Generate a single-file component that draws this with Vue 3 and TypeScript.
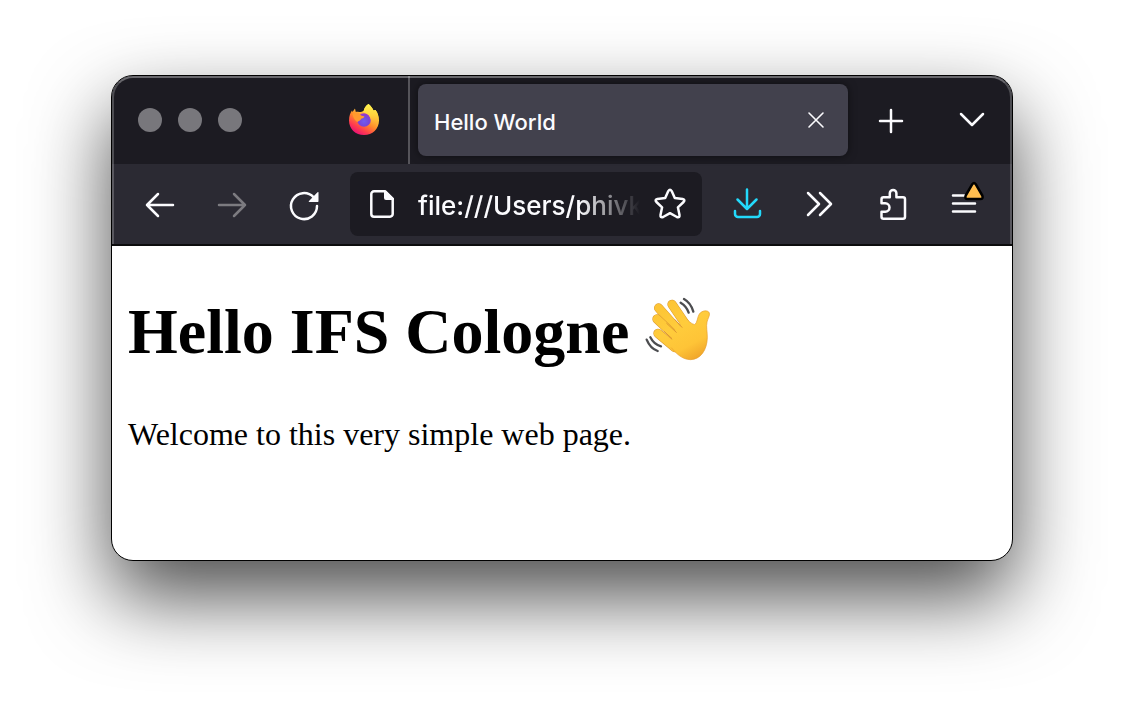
<script setup lang="ts">
import { ref } from 'vue'

const tabTitle = ref('Hello World')
const address = ref('file:///Users/phivk/')
const heading = ref('Hello IFS Cologne')
const message = ref('Welcome to this very simple web page.')
const fingers = [
  'M111 58L160 130',
  'M71 69L138 145',
  'M66 102L128 160',
  'M69 145L120 188',
]
</script>

<template>
  <div class="desktop">
    <div class="window">
      <header class="chrome">
        <div class="tabstrip">
          <div class="lights">
            <button v-for="label in ['Close', 'Minimise', 'Zoom']" :key="label" class="light" :aria-label="label"></button>
          </div>
          <button class="home" aria-label="Firefox View">
            <svg class="icon" viewBox="0 0 32 32">
              <defs>
                <linearGradient id="fox" x1="0.85" y1="0.1" x2="0.3" y2="1">
                  <stop offset="0" stop-color="#fff44f" />
                  <stop offset="0.3" stop-color="#ffc83c" />
                  <stop offset="0.55" stop-color="#ff8a2a" />
                  <stop offset="0.8" stop-color="#ff3c4e" />
                  <stop offset="1" stop-color="#e81078" />
                </linearGradient>
                <linearGradient id="tail" x1="0.5" y1="0" x2="0.5" y2="1">
                  <stop offset="0" stop-color="#fff44f" />
                  <stop offset="0.5" stop-color="#ffd03c" />
                  <stop offset="1" stop-color="#ff8a2a" stop-opacity="0" />
                </linearGradient>
                <radialGradient id="globe" cx="0.5" cy="0.6" r="0.6">
                  <stop offset="0" stop-color="#6e5cf0" />
                  <stop offset="0.6" stop-color="#7547d8" />
                  <stop offset="1" stop-color="#a333c8" />
                </radialGradient>
              </defs>
              <path fill="url(#fox)" d="M20.5 0C23 2 24.500 4.200 25.500 6.500L27.500 6C29.800 9 31 12.500 31 16.500C31 25 24.500 31 16 31C7.500 31 1 25 1 16.500C1 12 2.500 8.500 4 6.500L4.500 8L7 4.500L7.800 8C8.500 7.500 10 7.500 11 8C13 8 14.500 7.500 16 6.500C16 4 18 1.500 20.500 0Z" />
              <circle cx="16" cy="16" r="6.800" fill="url(#globe)" />
              <path fill="url(#tail)" d="M20.500 0C23 2 24.500 4.200 25.500 6.500L27.500 6C29.800 9 31 12.500 30 18C28 24 24 25 22 23C25 19 22.500 13 20 10.500C17.500 9 16 8.500 15.500 7.500C16 4 18 1.500 20.500 0Z" />
              <path fill="#ff9a2e" d="M4.500 10C7 8 11 8 12.500 11C14 12.300 16 12 16.500 12.500C16 14 13.500 14.500 13 15C12.500 16.500 10.500 17 9.500 18C7.500 17 5 14 4.500 10Z" />
            </svg>
          </button>
          <div class="tab">
            <span class="tab-title">{{ tabTitle }}</span>
            <button class="tab-close" aria-label="Close tab">
              <svg class="icon thin" viewBox="0 0 32 32"><path d="M9 9L23 23M23 9L9 23" /></svg>
            </button>
          </div>
          <button class="tool strip-tool" aria-label="New tab">
            <svg class="icon" viewBox="0 0 32 32"><path d="M15 6V28M4 17H26" /></svg>
          </button>
          <button class="tool strip-tool" aria-label="List all tabs">
            <svg class="icon" viewBox="0 0 32 32"><path d="M5 10L16 21L27 10" /></svg>
          </button>
        </div>

        <nav class="toolbar" aria-label="Navigation">
          <button class="tool" aria-label="Back">
            <svg class="icon" viewBox="0 0 32 32"><path d="M29 17H3M14 6L3 17L14 28" /></svg>
          </button>
          <button class="tool dim" aria-label="Forward" disabled>
            <svg class="icon" viewBox="0 0 32 32"><path d="M3 17H29M18 6L29 17L18 28" /></svg>
          </button>
          <button class="tool" aria-label="Reload">
            <svg class="icon" viewBox="0 0 32 32">
              <path d="M29 18A13 13 0 1 1 25.500 9.200" />
              <path class="solid" d="M30.500 4.500V13.300Q30.500 14 29.800 14H21.500Q20 14 21 13L29.500 4.200Q30.500 3.500 30.500 4.500Z" />
            </svg>
          </button>
          <div class="urlbar">
            <svg class="icon" viewBox="0 0 32 32">
              <path d="M19 3.300H8a2.700 2.700 0 0 0-2.700 2.700V26a2.700 2.700 0 0 0 2.700 2.700H24a2.700 2.700 0 0 0 2.700-2.700V11Z" />
              <path class="solid" d="M18 2.500H20L28 10.500V12H20a2 2 0 0 1-2-2Z" />
            </svg>
            <input v-model="address" class="address" type="text" aria-label="Address" spellcheck="false" />
            <button class="star" aria-label="Bookmark this page">
              <svg class="icon" viewBox="0 0 32 32">
                <path d="M14.300 3.100Q16 .5 17.700 3.100L20.800 10.100L28.600 11Q31.600 11.700 29.600 14L23.900 19.300L25.500 27Q25.800 30.200 22.900 29L16 25.200L9.100 29Q6.200 30.200 6.500 27L8.100 19.300L2.400 14Q.4 11.700 3.400 11L11.200 10.100Z" />
              </svg>
            </button>
          </div>
          <button class="tool download" aria-label="Downloads">
            <svg class="icon" viewBox="0 0 32 32">
              <path d="M15 1.500V20M5.500 11.500L15 21L24.500 11.500M3 23V26a3 3 0 0 0 3 3H25a3 3 0 0 0 3-3V23" />
            </svg>
          </button>
          <button class="tool" aria-label="More tools">
            <svg class="icon" viewBox="0 0 32 32"><path d="M4 5L15 16L4 27M16 5L27 16L16 27" /></svg>
          </button>
          <button class="tool" aria-label="Extensions">
            <svg class="icon" viewBox="0 0 32 32">
              <path d="M5.500 15.300V11.300a2 2 0 0 1 2-2H13.800V5.200a3.300 3.300 0 0 1 6.600 0V9.300H27a2 2 0 0 1 2 2V28.800a2 2 0 0 1-2 2H7.500a2 2 0 0 1-2-2V23.700H9.300a4.200 4.200 0 0 0 0-8.400Z" />
            </svg>
          </button>
          <button class="tool" aria-label="Open application menu">
            <svg class="icon" viewBox="0 0 32 32">
              <path d="M5 7.500H27M5 15.500H27M5 23.500H27" />
              <path class="alert" d="M24.300-3.800Q26-6.400 27.700-3.800L34.300 7.500Q35.600 10.900 32.300 11H19.700Q16.400 10.900 17.700 7.500Z" />
            </svg>
          </button>
        </nav>
      </header>

      <main class="page">
        <h1>
          <span>{{ heading }}</span>
          <svg class="wave" viewBox="30 33 198 198" role="img" aria-label="Waving hand">
            <defs>
              <linearGradient id="skin" gradientUnits="userSpaceOnUse" x1="90" y1="60" x2="180" y2="225">
                <stop offset="0" stop-color="#fdc535" />
                <stop offset="0.4" stop-color="#ffcc3c" />
                <stop offset="0.75" stop-color="#fec437" />
                <stop offset="1" stop-color="#f0a52a" />
              </linearGradient>
            </defs>
            <g fill="none" stroke-linecap="round">
              <template v-for="finger in fingers" :key="finger">
                <path :d="finger" stroke="#dc9a30" stroke-width="28" />
                <path :d="finger" stroke="url(#skin)" stroke-width="25" />
              </template>
            </g>
            <path fill="url(#skin)" stroke="#e69d2a" stroke-width="2" d="M108 187C122 203 140 224 167 224C197 223 216 195 217 158C217 139 213 125 216 111C219 99 225 92 223 84C219 74 201 76 193 87C187 96 187 114 179 119C169 117 158 106 151 98" />
            <path fill="url(#skin)" d="M151 98L166 116L180 150L150 200L108 187L101 180L112 165L110 147L122 143L120 128L136 125L138 107Z" />
            <path fill="none" stroke="#dd9630" stroke-width="3" stroke-linecap="round" d="M120 104L141 127M95 115L124 142M88 140L110 160" />
            <g fill="none" stroke="#4c4d50" stroke-width="7" stroke-linecap="round">
              <path d="M147 42Q168 54 175 80M137 53Q155 64 161 83M46 157Q57 179 78 184M35 164Q46 191 68 198" />
            </g>
          </svg>
        </h1>
        <p>{{ message }}</p>
      </main>
    </div>
  </div>
</template>

<style>
body {
  margin: 0;
  background: #fff;
}
</style>

<style scoped>
.desktop {
  box-sizing: border-box;
  display: flex;
  flex-direction: column;
  min-height: 100vh;
  padding: 75px 111px 147px;
  overflow: hidden;
}

.window {
  display: flex;
  flex: 1;
  flex-direction: column;
  overflow: hidden;
  background: #fff;
  border: 1px solid #000;
  border-radius: 22px;
  box-shadow: 0 36px 80px rgba(0, 0, 0, 0.7);
}

.chrome {
  position: relative;
  color: #fbfbfe;
  font-family: Inter, "Liberation Sans", sans-serif;
  background: #2b2a33;
  border-bottom: 2px solid #0c0c0d;
}

.chrome::after {
  position: absolute;
  inset: 0;
  content: "";
  border: 2px solid rgba(255, 255, 255, 0.22);
  border-top-color: rgba(255, 255, 255, 0.34);
  border-bottom: 0;
  border-radius: 21px 21px 0 0;
  pointer-events: none;
}

button {
  display: flex;
  flex: none;
  align-items: center;
  justify-content: center;
  padding: 0;
  color: inherit;
  background: none;
  border: 0;
}

.icon {
  display: block;
  flex: none;
  width: 32px;
  height: 32px;
  overflow: visible;
}

.icon path {
  stroke-linecap: round;
  stroke-linejoin: round;
}

.tool .icon,
.urlbar .icon,
.tab-close .icon {
  fill: none;
  stroke: currentColor;
  stroke-width: 2.5;
}

.tab-close .thin {
  stroke-width: 1.6;
}

.icon .solid {
  fill: currentColor;
  stroke: none;
}

.icon .alert {
  fill: #ffbd4f;
  stroke: #000;
}

.tabstrip {
  display: flex;
  align-items: center;
  height: 88px;
  padding: 0 4px 0 26px;
  background: #1c1b22;
}

.lights {
  display: flex;
  gap: 16px;
}

.light {
  width: 24px;
  height: 24px;
  background: #78777c;
  border-radius: 50%;
}

.home {
  box-sizing: border-box;
  width: 90px;
  height: 88px;
  margin-left: 78px;
  border-right: 2px solid #56555b;
}

.tab {
  display: flex;
  flex: 1;
  align-items: center;
  justify-content: space-between;
  min-width: 0;
  height: 72px;
  box-sizing: border-box;
  margin-left: 8px;
  padding: 0 16px;
  background: #42414d;
  border-radius: 8px;
  box-shadow: 0 0 8px rgba(0, 0, 0, 0.5);
}

.tab-title {
  padding-top: 4px;
  font-size: 22px;
  font-weight: 500;
  line-height: 28px;
  white-space: nowrap;
}

.strip-tool {
  margin-left: 8px;
}

.toolbar {
  display: flex;
  align-items: center;
  padding: 8px 12px;
}

.tool {
  width: 72px;
  height: 64px;
}

.dim {
  color: #7c7b80;
}

.download {
  color: #23d9fb;
}

.urlbar {
  display: flex;
  flex: 1;
  align-items: center;
  min-width: 0;
  height: 64px;
  box-sizing: border-box;
  margin: 0 10px;
  padding: 0 16px;
  background: #1c1b22;
  border-radius: 8px;
}

.address {
  flex: 1;
  min-width: 0;
  height: 40px;
  margin: 0 14px 0 20px;
  padding: 2px 0 0;
  color: inherit;
  font: 500 26px Inter, "Liberation Sans", sans-serif;
  background: none;
  border: 0;
  outline: 0;
  mask-image: linear-gradient(to left, transparent, #000 60px);
}

.page {
  flex: 1;
  padding: 44px 16px;
  color: #000;
  font-family: "Liberation Serif", "Times New Roman", serif;
}

h1 {
  display: flex;
  gap: 16px;
  align-items: flex-start;
  margin: 0;
  font-size: 64px;
  line-height: 84px;
}

.wave {
  flex: none;
  width: 66px;
  height: 66px;
  margin-top: 6px;
}

p {
  margin: 40px 0 0;
  font-size: 32px;
  line-height: 40px;
}
</style>
